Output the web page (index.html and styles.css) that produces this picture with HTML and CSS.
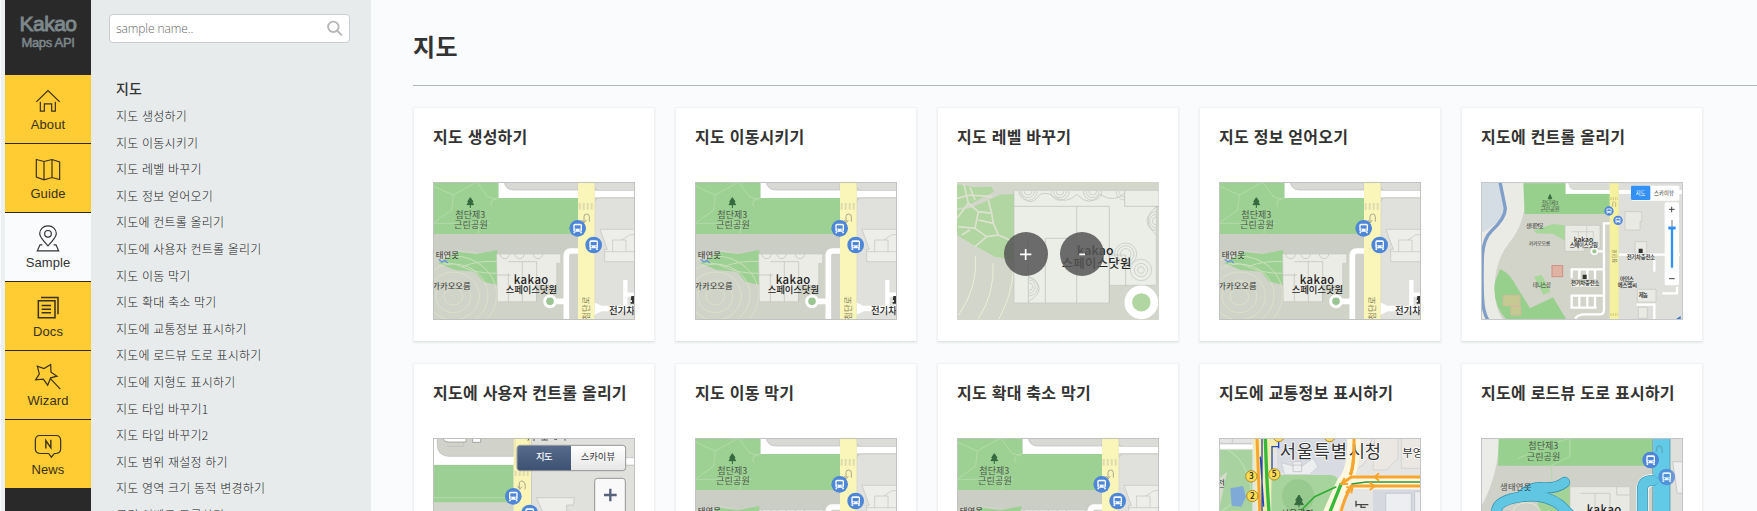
FILE: index.html
```
<!DOCTYPE html>
<html lang="ko">
<head>
<meta charset="utf-8">
<title>Kakao Maps API Sample</title>
<link rel="stylesheet" href="styles.css">
</head>
<body>
<svg class="defs" aria-hidden="true">
  <defs>
    <g id="bus">
      <circle r="25" fill="#4e86d8"/>
      <rect x="-13" y="-14" width="26" height="24" rx="5" fill="#fff"/>
      <rect x="-9" y="-9" width="18" height="10" fill="#4e86d8"/>
      <path d="M-10 10v5M10 10v5" stroke="#fff" stroke-width="5"/>
      <circle cx="-7" cy="5" r="2" fill="#4e86d8"/><circle cx="7" cy="5" r="2" fill="#4e86d8"/>
    </g>
    <symbol id="map-base" viewBox="99 246 606 414">
      <rect x="99" y="246" width="606" height="414" fill="#d0d3c8"/>
      <path d="M99 246H296V294H534V403H99Z" fill="#9dd193"/>
      <path d="M99 258L160 285L230 246M160 285L155 330L99 370M230 246L262 290L290 300M240 340L234 400L234 470M275 320a17 17 0 0 1 20-25M270 370H99" fill="none" stroke="#b3dba9" stroke-width="3"/>
      <path d="M99 403H534V462H290L170 450L99 460Z" fill="#cbcec5"/>
      <path d="M296 246H534V294H296Z" fill="#fff"/>
      <path d="M312 246Q318 270 340 270H534V246Z" fill="#d8d9d4" stroke="#bbb" stroke-width="2"/>
      <path d="M584 246H705V272H600Q586 272 584 262Z" fill="#dcdcd8" stroke="#bbb" stroke-width="2"/>
      <path d="M584 272H705V292H584Z" fill="#fff"/>
      <path d="M584 306Q586 294 600 294H705V660H584Z" fill="#e0e1dc" stroke="#c4c4c0" stroke-width="2"/>
      <path d="M600 388H705V485H614V448H622Z" fill="#ededea" stroke="#c1c1bd" stroke-width="2"/>
      <path d="M638 455V420H678V455M665 420L690 404H705M614 455H705" fill="none" stroke="#c1c1bd" stroke-width="2"/>
      <path d="M115 490L170 455L230 462L292 450V555L250 545L225 515L165 510Z" fill="#9dd193"/>
      <g fill="none" stroke="#e3e6c8" stroke-width="2">
        <ellipse cx="160" cy="590" rx="28" ry="25"/><ellipse cx="160" cy="590" rx="52" ry="48"/><ellipse cx="160" cy="588" rx="78" ry="72"/><ellipse cx="160" cy="586" rx="104" ry="94"/><ellipse cx="160" cy="584" rx="130" ry="116"/>
      </g>
      <path d="M112 498Q145 480 185 500T290 520M185 500Q240 480 292 485" fill="none" stroke="#c9dfbc" stroke-width="3"/>
      <path d="M116 478l10 8 9-5 8 8" fill="none" stroke="#6d93e0" stroke-width="4"/>
      <path d="M290 462H482V490H470V556H410V605H292Z" fill="#ecece7" stroke="#c8c9c2" stroke-width="2"/>
      <path d="M325 485H410V605M367 485V605M332 525H290M325 520V605M300 462a12 12 0 0 0 28 0M345 462a12 12 0 0 0 28 0M400 462a12 12 0 0 0 28 0" fill="none" stroke="#bdbdb6" stroke-width="2"/>
      <path d="M508 465H532V660H508Z" fill="#d0d2cb"/>
      <path d="M536 453H512Q499 453 499 468V660M455 604H498" fill="none" stroke="#fff" stroke-width="17"/>
      <circle cx="450" cy="604" r="16" fill="#9bc493" stroke="#fff" stroke-width="9"/>
      <path d="M534 246H584V660H534Z" fill="#faf6b9"/>
      <path d="M536 319H582" stroke="#dfdcaf" stroke-width="20" stroke-dasharray="6 6"/>
      <path d="M552 368V350Q552 342 560 342T568 350V365M546 360l6 9 7-9" fill="none" stroke="#aaa88d" stroke-width="3"/>
      <path d="M584 608L605 617H705V634H605L584 644Z" fill="#fff"/>
      <path d="M676 540V584H705M676 584V617" fill="none" stroke="#fff" stroke-width="13"/>
      <path d="M694 588H705V611H692V606H696V600H692Z" fill="#333"/>
      <path d="M211 293l-8 12h4l-6 9h20l-6-9h4ZM211 310v14" fill="#35693f" stroke="#35693f" stroke-width="3"/>
      <g class="map-label">
        <text x="166" y="354" textLength="90" fill="#4b5a4a">첨단제3</text><text x="162" y="384" textLength="101" fill="#4b5a4a">근린공원</text>
        <text x="107" y="474" textLength="70" font-size="25">태연못</text><text x="97" y="567" textLength="115" font-size="25">가카오오름</text>
        <text class="map-label--strong" x="341" y="551" textLength="104" font-size="34">kakao</text><text class="map-label--strong" x="317" y="580" textLength="154" font-size="28">스페이스닷원</text>
        <text class="map-label--strong" x="627" y="641" font-size="28">전기차</text>
        <text class="map-label--road" transform="translate(568 659) rotate(-90)" font-size="25">첨단로</text>
      </g>
      <use href="#bus" x="533" y="385"/><use href="#bus" x="581" y="435"/>
      <rect x="100.500" y="247.500" width="603" height="411" fill="none" stroke="#bfc2bf" stroke-width="3"/>
    </symbol>
  </defs>
</svg>
<div class="page">
  <nav class="rail">
    <a class="brand"><strong>Kakao</strong><span>Maps API</span></a>
    <a class="rail__item"><svg class="rail__icon" viewBox="99 262 90 80"><path d="M109 306L144 272L179 306M121 306V334H133V312H155V334H166V306"/></svg>About</a>
    <a class="rail__item"><svg class="rail__icon" viewBox="96 474 90 80"><path d="M106 484L129 490L153 484L176 491V544L153 538L129 545L106 537ZM129 490V545M153 484V538"/></svg>Guide</a>
    <a class="rail__item rail__item--active"><svg class="rail__icon" viewBox="97 677 90 80"><path d="M142 739Q117 713 117 702A25 23 0 0 1 167 702Q167 713 142 739ZM125 736H118L110 754H174L166 736H159"/><circle cx="142" cy="703" r="10"/></svg>Sample</a>
    <a class="rail__item"><svg class="rail__icon" viewBox="97 135 90 80"><path d="M113 155H163V206H113ZM121 145H172V195M123 169H151M123 180H151M123 191H151" stroke-width="4.500"/></svg>Docs</a>
    <a class="rail__item"><svg class="rail__icon" viewBox="98 343 90 80"><path d="M151 347L152 370L170 382L151 387L142 409L129 391L106 393L117 375L111 352L131 359ZM151 390L180 421"/></svg>Wizard</a>
    <a class="rail__item"><svg class="rail__icon" viewBox="96 548 90 80"><path d="M117 558H165Q179 558 179 573V597Q179 611 165 612H160L151 623L143 612H117Q103 611 103 597V573Q103 558 117 558Z"/><path d="M134.500 597V573L149.500 595V571" stroke-width="4.200"/></svg>News</a>
  </nav>
  <aside class="side">
    <label class="search"><input type="text" placeholder="sample name.."><svg class="search__icon" viewBox="980 60 54 52"><circle cx="1002" cy="81" r="16"/><path d="M1013 92L1028 107"/></svg></label>
    <h2 class="side__title">지도</h2>
    <ul class="side__list">
      <li>지도 생성하기</li>
      <li>지도 이동시키기</li>
      <li>지도 레벨 바꾸기</li>
      <li>지도 정보 얻어오기</li>
      <li>지도에 컨트롤 올리기</li>
      <li>지도에 사용자 컨트롤 올리기</li>
      <li>지도 이동 막기</li>
      <li>지도 확대 축소 막기</li>
      <li>지도에 교통정보 표시하기</li>
      <li>지도에 로드뷰 도로 표시하기</li>
      <li>지도에 지형도 표시하기</li>
      <li>지도 타입 바꾸기1</li>
      <li>지도 타입 바꾸기2</li>
      <li>지도 범위 재설정 하기</li>
      <li>지도 영역 크기 동적 변경하기</li>
      <li>클릭 이벤트 등록하기</li>
    </ul>
  </aside>
  <main class="content">
    <h1 class="content__title">지도</h1>
    <div class="grid">
      <article class="card"><h3>지도 생성하기</h3><svg class="thumb"><use href="#map-base"/></svg></article>
      <article class="card"><h3>지도 이동시키기</h3><svg class="thumb"><use href="#map-base"/></svg></article>
      <article class="card"><h3>지도 레벨 바꾸기</h3>
        <svg class="thumb" viewBox="111 246 606 414">
          <rect x="111" y="246" width="606" height="414" fill="#d3d6cb"/>
          <path d="M111 253L160 262L215 260L222 275L175 300L135 322L111 325ZM205 300L240 284L282 282V480L225 470L160 435L111 405V330L150 325Z" fill="#b1d6a1"/>
          <path d="M111 295L150 285L215 290M132 253L145 310L111 355M145 310L175 335L215 340L205 300M175 335L165 385L115 380M165 385L200 410L235 405L220 370L175 360M220 370L215 340M200 410L165 440M235 405L282 425M125 405L150 390M150 262L165 300" fill="none" stroke="#dde1cf" stroke-width="5"/>
          <path d="M166 468Q175 560 116 645M219 490Q225 580 174 658M281 505Q275 590 236 658" fill="none" stroke="#edefd6" stroke-width="3"/>
          <path d="M282 271H717V319H709V556H568V609H282Z" fill="#ebeee7" stroke="#c2c5bf" stroke-width="2"/>
          <path d="M282 319H568V609M470 319V609M376 609V415H470M325 415V609M614 271V319H717M568 556V465H617V556M297 275Q330 330 360 283Q385 275 400 290Q440 315 470 283Q510 325 540 283Q580 310 614 280M709 320Q660 360 709 405M325 530Q390 565 325 605" fill="none" stroke="#babdb8" stroke-width="2"/>
          <g fill="none" stroke="#c0c4be" stroke-width="2">
            <path d="M296 273a28 28 0 0 0 56 0M304 273a20 20 0 0 0 40 0M312 273a12 12 0 0 0 24 0M392 273a28 28 0 0 0 56 0M400 273a20 20 0 0 0 40 0M408 273a12 12 0 0 0 24 0M490 273a28 28 0 0 0 56 0M498 273a20 20 0 0 0 40 0M506 273a12 12 0 0 0 24 0M588 273a26 26 0 0 0 26 27M596 273a18 18 0 0 0 18 18M709 335a28 28 0 0 0 0 56M709 343a20 20 0 0 0 0 40M709 351a12 12 0 0 0 0 24M326 532a28 28 0 0 1 0 56M326 540a20 20 0 0 1 0 40M326 548a12 12 0 0 1 0 24"/>
            <circle cx="617" cy="462" r="33"/><circle cx="617" cy="462" r="25"/><circle cx="617" cy="462" r="16"/><circle cx="663" cy="510" r="32"/><circle cx="663" cy="510" r="20"/><circle cx="663" cy="510" r="10"/>
          </g>
          <circle cx="664" cy="607" r="39" fill="#b1d6a1" stroke="#fff" stroke-width="23"/>
          <g class="map-label map-label--strong"><text x="471" y="466" textLength="110" font-size="37">kakao</text><text x="425" y="504" textLength="209" font-size="37">스페이스닷원</text></g>
          <g fill="#555" fill-opacity=".86"><circle cx="318" cy="462" r="66"/><circle cx="486" cy="462" r="66"/></g>
          <path d="M300 463H334M317 447V480M478 463H495" stroke="#fff" stroke-width="5"/>
        </svg>
      </article>
      <article class="card"><h3>지도 정보 얻어오기</h3><svg class="thumb"><use href="#map-base"/></svg></article>
      <article class="card"><h3>지도에 컨트롤 올리기</h3>
        <svg class="thumb" viewBox="93 246 606 414">
          <rect x="93" y="246" width="606" height="414" fill="#d2d3c9"/>
          <path d="M93 246H225Q235 360 180 425Q135 480 134 560Q135 630 160 660H93Z" fill="#ebebe6"/>
          <path d="M93 246H155L170 330Q160 360 93 400Z" fill="#d4dce4"/>
          <path d="M150 246L166 325Q166 355 125 392Q100 415 97 470Q95 550 98 600Q100 640 115 662" fill="none" stroke="#809fc8" stroke-width="10"/>
          <path d="M220 250H347V282H480V342H224Z" fill="#97d08c"/>
          <path d="M150 507Q180 520 200 560L240 625L309 592L350 660H170Q125 610 135 545Z" fill="#97d08c"/>
          <path d="M347 250H480V282H347Z" fill="#fff"/><path d="M355 250H480V270H370Q357 268 355 250Z" fill="#d9dbd5"/>
          <path d="M506 250H699V660H506Z" fill="#dedfda"/><path d="M506 270H699V282H506Z" fill="#fff"/>
          <path d="M250 392L310 372L345 376V422L310 402L260 400ZM252 530L275 525L302 575L280 585Z" fill="#a8d79a"/>
          <path d="M345 376H450V445H403V454H345ZM525 335H575V365H570V390H525ZM555 425H590V460H555ZM562 568H618V606H562ZM565 622H592V655H565Z" fill="#eaeae5" stroke="#c4c5be" stroke-width="2"/>
          <path d="M365 395H430V430M385 395V450M410 376V430" fill="none" stroke="#c4c5be" stroke-width="2"/>
          <path d="M480 370H462V630Q462 643 450 643H405Q382 643 376 656M462 508H365V535M388 508V538M412 508V538M435 508V538M365 556H440M462 587H365V623H440M388 587V623M412 587V623M435 587V623M440 454H460M506 464H690M560 614H613V658M613 480V515M637 580H681V560" fill="none" stroke="#fff" stroke-width="7"/>
          <circle cx="433" cy="454" r="9" fill="#9dc68f" stroke="#fff" stroke-width="5"/>
          <path d="M479 250H506V660H479Z" fill="#f5f19f"/><path d="M481 644H504M481 296H504" stroke="#d7cf83" stroke-width="8" stroke-dasharray="4 3"/>
          <path d="M488 320V308Q492 300 497 309V321" fill="none" stroke="#a79d73" stroke-width="2"/>
          <rect x="306" y="497" width="32" height="33" fill="#dfb3a4" stroke="#d18e82" stroke-width="3"/><path d="M160 587H210V617H160ZM183 620H212V645H183Z" fill="#c5c992" stroke="#d4bb9d" stroke-width="3"/>
          <path d="M300 283l-6 13h12ZM300 294v7" fill="#35693f" stroke="#35693f" stroke-width="2"/>
          <path d="M566 446h12v13h-12ZM398 524h12v13h-12Z" fill="#333"/>
          <g class="map-label" font-size="18">
            <text x="275" y="315" textLength="50" font-size="16" fill="#4b5a4a">첨단제3</text><text x="272" y="332" textLength="57" font-size="16" fill="#4b5a4a">근린공원</text><text x="228" y="384" textLength="53" font-size="16">생태연못</text><text x="236" y="435" textLength="65" font-size="15">카카오오름</text><text x="248" y="560" textLength="55" font-size="16">테니스장</text>
            <g class="map-label--strong"><text x="371" y="425" textLength="58" font-size="20">kakao</text><text x="359" y="441" textLength="85" font-size="16">스페이스닷원</text><text x="530" y="476" textLength="85" font-size="16">전기차충전소</text><text x="363" y="554" textLength="85" font-size="16">전기차충전소</text><text x="510" y="543" textLength="42" font-size="16">아인스</text><text x="503" y="560" textLength="58" font-size="16">에스엠씨</text><text x="566" y="592" textLength="28" font-size="16">제놈</text></g>
            <text class="map-label--road" transform="translate(497 489) rotate(-90)" font-size="15">첨단로</text>
          </g>
          <use href="#bus" transform="translate(477 333) scale(.56)"/><use href="#bus" transform="translate(504 361) scale(.56)"/>
          <rect x="543" y="257" width="145" height="45" rx="4" fill="#fff"/><rect x="543" y="257" width="58" height="43" rx="4" fill="#3391f5"/>
          <text x="557" y="285" textLength="29" font-size="16" fill="#fff">지도</text><text x="612" y="285" textLength="60" font-size="16">스카이뷰</text>
          <rect x="644" y="307" width="43" height="249" rx="5" fill="#fff"/>
          <path d="M657 328H674M665 320V337M657 536H674" stroke="#444" stroke-width="3"/><path d="M666 360V382" stroke="#bbb" stroke-width="6"/><path d="M666 382V503" stroke="#3290f1" stroke-width="7"/><path d="M655 384H677" stroke="#3290f1" stroke-width="9"/>
          <path d="M677 658L692 648V658Z" fill="#3a79ca"/>
          <rect x="94.500" y="247.500" width="603" height="411" fill="none" stroke="#c5c9ca" stroke-width="3"/>
        </svg>
      </article>
      <article class="card"><h3>지도에 사용자 컨트롤 올리기</h3>
        <svg class="thumb" viewBox="99 264 606 414">
          <rect x="99" y="264" width="606" height="414" fill="#d1d4ca"/>
          <path d="M99 264H705V344H99Z" fill="#fff"/><path d="M112 264H340V319H145Q112 316 112 285Z" fill="#d1d3ca" stroke="#b8bab4" stroke-width="2"/>
          <path d="M130 264H198V276H145Q130 275 130 264ZM218 264H242V277H218Z" fill="#fff" stroke="#888" stroke-width="2"/><path d="M142 289H190V277" fill="none" stroke="#bbb" stroke-width="2"/>
          <path d="M99 345H340V457H99Z" fill="#9ccf93"/><path d="M99 443H340" stroke="#b4dba9" stroke-width="3"/>
          <path d="M394 264H705V323H394ZM394 346H705V678H394Z" fill="#e0e1dd" stroke="#bbb" stroke-width="2"/>
          <path d="M409 443H523L520 465H500V490H430Z" fill="#ededea" stroke="#bebebb" stroke-width="2"/>
          <path d="M341 264H393V678H341Z" fill="#faf5b7"/><path d="M345 264V345M389 264V345" stroke="#d9d5a9" stroke-width="2"/><path d="M344 370H390" stroke="#dfdbad" stroke-width="16" stroke-dasharray="6 6"/><path d="M358 416V400Q360 390 369 394T375 418M353 408l6 10 7-8" fill="none" stroke="#aaa78b" stroke-width="3"/>
          <path d="M386 266l-2 6M402 265v8M424 270h20M434 264v6M463 268h8M495 265v7" stroke="#555" stroke-width="3"/>
          <use href="#bus" x="340" y="439"/><use href="#bus" x="389" y="489"/>
          <defs><linearGradient id="btn" x2="0" y2="1"><stop stop-color="#fff"/><stop offset="1" stop-color="#e6e6e6"/></linearGradient><linearGradient id="btn-on" x2="0" y2="1"><stop stop-color="#576b8d"/><stop offset="1" stop-color="#3d5173"/></linearGradient></defs>
          <rect x="351" y="286" width="326" height="76" rx="9" fill="url(#btn)" stroke="#949494" stroke-width="3"/><path d="M513 287H361Q352 287 352 297V351Q352 361 361 361H513Z" fill="url(#btn-on)"/>
          <text class="map-label--strong" x="408" y="331" textLength="50" font-size="28" fill="#fff">지도</text><text x="542" y="331" textLength="103" font-size="28">스카이뷰</text>
          <rect x="584" y="385" width="92" height="210" rx="9" fill="#f9f9f9" stroke="#949494" stroke-width="3"/><path d="M612 435H650M631 416V454" stroke="#56627c" stroke-width="7"/>
          <rect x="100.500" y="265.500" width="603" height="411" fill="none" stroke="#bfc2bf" stroke-width="3"/>
        </svg>
      </article>
      <article class="card"><h3>지도 이동 막기</h3><svg class="thumb"><use href="#map-base"/></svg></article>
      <article class="card"><h3>지도 확대 축소 막기</h3><svg class="thumb"><use href="#map-base"/></svg></article>
      <article class="card"><h3>지도에 교통정보 표시하기</h3>
        <svg class="thumb" viewBox="88 264 606 414">
          <rect x="88" y="264" width="606" height="414" fill="#e5e5e4"/>
          <path d="M88 280H185M128 264V280" stroke="#bbb" stroke-width="2"/><path d="M88 290H190" stroke="#fff" stroke-width="12"/>
          <path d="M88 299H188V678H88Z" fill="#a8d3a0"/><path d="M115 300Q185 340 187 460M88 490L185 420" fill="none" stroke="#bbdfaf" stroke-width="4"/>
          <path d="M88 385L112 365L88 480Z" fill="#d4dccb"/><path d="M122 415L160 408L169 440L155 470L126 468Z" fill="#7faad8"/>
          <path d="M262 264H490L465 385L420 390L262 365Z" fill="#d8dce2"/><path d="M275 338L310 348V335H336V349L370 325L385 350L360 374H285Z" fill="#edeeef" stroke="#c2c6ca" stroke-width="2"/><path d="M310 345h26v20h-26Z" fill="none" stroke="#bbb" stroke-width="2"/>
          <path d="M262 375H425Q452 380 448 405L410 490L380 678H245V385Z" fill="#a7d39d"/><ellipse cx="325" cy="438" rx="48" ry="50" fill="#98ca90"/>
          <path d="M505 264H545V310L520 345L495 360ZM555 264H625V325L590 360H550ZM635 264H694V355H635Z" fill="#ebe8e3" stroke="#cbcac5" stroke-width="2"/>
          <path d="M550 420H694V678H550Z" fill="#d5d9df"/><path d="M588 430H665V500H588ZM675 425H694V500H675Z" fill="#eceef1" stroke="#b9bfc7" stroke-width="2"/>
          <path d="M190 264H265L248 320L240 520H203Z" fill="#f5edaf"/>
          <path d="M493 264Q494 365 460 400L415 500M465 397H694" fill="none" stroke="#fff7df" stroke-width="40"/>
          <path d="M202 264L211 500M493 264Q494 345 482 375M482 415Q465 440 450 500M694 381H485L455 402M694 408H485L470 430" fill="none" stroke="#f7a52f" stroke-width="9"/>
          <path d="M227 264Q231 400 239 500M455 400L415 500" fill="none" stroke="#35b938" stroke-width="10"/><path d="M440 410L375 440L335 480" fill="none" stroke="#32ad35" stroke-width="5"/><path d="M485 402L530 396H694" fill="none" stroke="#32993b" stroke-width="4"/>
          <path d="M217 264V500M212 320L222 470M266 290H247V360L258 375M267 264V295" fill="none" stroke="#2448b8" stroke-width="4"/>
          <path d="M568 370L555 381L568 392M540 398L555 409L540 420M465 384L455 402H475M470 411L488 414L485 430" fill="none" stroke="#f7a52f" stroke-width="6"/>
          <g fill="#ffdc54" stroke="#ad8b29" stroke-width="3"><circle cx="185" cy="379" r="17"/><circle cx="254" cy="373" r="17"/><circle cx="188" cy="438" r="17"/><circle cx="267" cy="258" r="17"/><circle cx="420" cy="258" r="17"/></g>
          <g class="map-label--strong" font-size="25"><text x="178" y="388">3</text><text x="246" y="382">5</text><text x="181" y="447">2</text></g>
          <text class="map-label--halo" x="270" y="325" textLength="202" font-size="53">서울특별</text><text class="map-label--halo" x="477" y="325" textLength="97" font-size="53">시청</text><path d="M493 280Q494 345 482 375" fill="none" stroke="#f7a52f" stroke-width="9"/><text class="map-label--halo" x="638" y="320" font-size="34">부영</text><text x="82" y="410" font-size="26">전</text><text x="273" y="500" font-size="27">서울광장</text>
          <path d="M328 435l-10 16h5l-8 13h26l-8-13h5ZM328 460v12" fill="#35693f" stroke="#35693f" stroke-width="3"/><path d="M499 452V470M499 464H536M514 462V472H528" fill="none" stroke="#444" stroke-width="4"/>
          <rect x="89.500" y="265.500" width="603" height="411" fill="none" stroke="#c2c5c4" stroke-width="3"/>
        </svg>
      </article>
      <article class="card"><h3>지도에 로드뷰 도로 표시하기</h3>
        <svg class="thumb" viewBox="93 264 606 414">
          <rect x="93" y="264" width="606" height="414" fill="#d0d2ca"/>
          <path d="M93 264H148Q144 380 93 470Z" fill="#ebebe7"/><path d="M146 264H606V347H144Z" fill="#98d18f"/><path d="M205 325L285 290L360 264V320L305 345V480" fill="none" stroke="#b2dca8" stroke-width="3"/>
          <path d="M250 400H360V490H270Z" fill="#a4d398"/><ellipse cx="230" cy="490" rx="42" ry="32" fill="none" stroke="#e5e9cc" stroke-width="3"/>
          <path d="M360 410H540V500H360Z" fill="#e9e9e4" stroke="#c5c6be" stroke-width="2"/><path d="M392 430H480V500M435 430V500M540 435H500V410" fill="none" stroke="#bfc0b9" stroke-width="2"/>
          <path d="M660 264H699V678H660Z" fill="#dfe0db"/><path d="M668 335H699V430H682Z" fill="#eee" stroke="#bbb" stroke-width="2"/>
          <g class="map-label"><text x="235" y="298" textLength="90" fill="#4b5a4a">첨단제3</text><text x="230" y="329" textLength="101" fill="#4b5a4a">근린공원</text><text class="map-label--strong" x="410" y="493" textLength="104" font-size="34">kakao</text></g>
          <path d="M610 264H660V500H610Z" fill="#62c9e6"/><path d="M608 264V500M660 264V500" stroke="#428fa9" stroke-width="2"/><path d="M619 305Q620 286 629 288T636 310" fill="none" stroke="#5baabd" stroke-width="4"/>
          <path d="M608 392H600Q579 395 577 420V500" fill="none" stroke="#fff" stroke-width="38"/>
          <path d="M608 392H600Q577 395 577 420V500M140 480Q145 450 215 440T330 465L365 500M215 437Q240 410 280 413T344 397" fill="none" stroke="#348fae" stroke-width="33" stroke-linecap="round"/>
          <path d="M610 392H600Q577 395 577 420V500M140 480Q145 450 215 440T330 465L365 500M215 437Q240 410 280 413T344 397" fill="none" stroke="#60c6e2" stroke-width="29" stroke-linecap="round"/>
          <text x="150" y="419" textLength="94" font-size="25" opacity=".85">생태연못</text>
          <use href="#bus" x="602" y="330"/><use href="#bus" x="650" y="381" opacity=".8"/>
          <rect x="94.500" y="265.500" width="603" height="411" fill="none" stroke="#bfc5c7" stroke-width="3"/>
        </svg>
      </article>
    </div>
  </main>
</div>
</body>
</html>
```
FILE: styles.css
```
* { box-sizing: border-box; }
body { margin: 0; height: 511px; overflow: hidden; background: #fafbfd; color: #333; font-family: "Noto Sans CJK KR", sans-serif; }
h1, h2, h3, ul { margin: 0; padding: 0; }
.defs { display: none; }
.page { display: flex; height: 511px; overflow: hidden; padding-left: 1px; background: #fafbfd; }
.rail { display: flex; flex: none; flex-direction: column; width: 90px; border-left: 4px solid #edf0f1; background: #292929; font-family: "Liberation Sans", Arial, sans-serif; }
.brand { display: flex; flex-direction: column; align-items: center; height: 75px; padding-top: 12px; color: #7d888b; }
.brand strong { font-size: 21px; font-weight: 400; letter-spacing: -.5px; line-height: 23px; -webkit-text-stroke: .9px #7d888b; }
.brand span { font-size: 13px; letter-spacing: -.3px; line-height: 15px; -webkit-text-stroke: .5px #7d888b; }
.rail__item { display: flex; flex: none; flex-direction: column; align-items: center; height: 69px; padding-top: 12px; border-bottom: 1px solid #30291a; background: #ffcd33; color: #3a301c; font-size: 13px; line-height: 16px; letter-spacing: .1px; }
.rail__item:last-child { height: 68px; border: 0; }
.rail__item--active { background: #fafbfd; color: #333; }
.rail__icon { width: 30px; height: 27px; margin-bottom: 3px; fill: none; stroke: currentColor; stroke-width: 3.600; }
.side { flex: none; width: 280px; padding: 14px 21px 0 18px; background: #e7ebec; }
.search { display: flex; align-items: center; width: 241px; height: 29px; padding: 0 5px 0 6px; border: 1px solid #c9cdd3; border-radius: 4px; background: #fff; }
.search input { flex: 1; min-width: 0; padding: 0; border: 0; background: none; outline: 0; font: 300 12px "Open Sans", "Noto Sans", sans-serif; letter-spacing: -.1px; }
.search input::placeholder { color: #666; }
.search__icon { width: 18px; height: 17px; fill: none; stroke: #b8b8b8; stroke-width: 6; }
.side__title { margin: 35px 0 0 7px; font-size: 14px; font-weight: 500; line-height: 20px; }
.side__list { padding: 5px 0 0 7px; color: #222; list-style: none; font-size: 12px; font-weight: 300; letter-spacing: .2px; line-height: 26.600px; white-space: nowrap; }
.content { flex: 1; min-width: 0; padding: 25px 0 0 42px; }
.content__title { height: 61px; border-bottom: 1px solid #b0b7b8; font-size: 24px; font-weight: 700; letter-spacing: .4px; line-height: 42px; }
.grid { display: grid; grid-template-columns: repeat(5, 242px); gap: 21px 20px; padding-top: 21px; }
.card { height: 235px; padding: 13px 19px 0; border: 1px solid #f0f2f3; border-bottom-color: #e2e5e6; background: #fff; box-shadow: 0 1px 2px #e8eaeb; }
.card h3 { font-size: 16px; font-weight: 700; letter-spacing: .25px; line-height: 30px; white-space: nowrap; }
.thumb { display: block; width: 202px; height: 138px; margin-top: 31px; font-size: 27px; fill: #333; }
.map-label--strong { font-weight: 500; fill: #222; }
.map-label--strong[fill] { fill: #fff; }
.map-label--road { fill: #858360; }
.map-label--halo { paint-order: stroke; stroke: #fff; stroke-width: 4px; }
```
